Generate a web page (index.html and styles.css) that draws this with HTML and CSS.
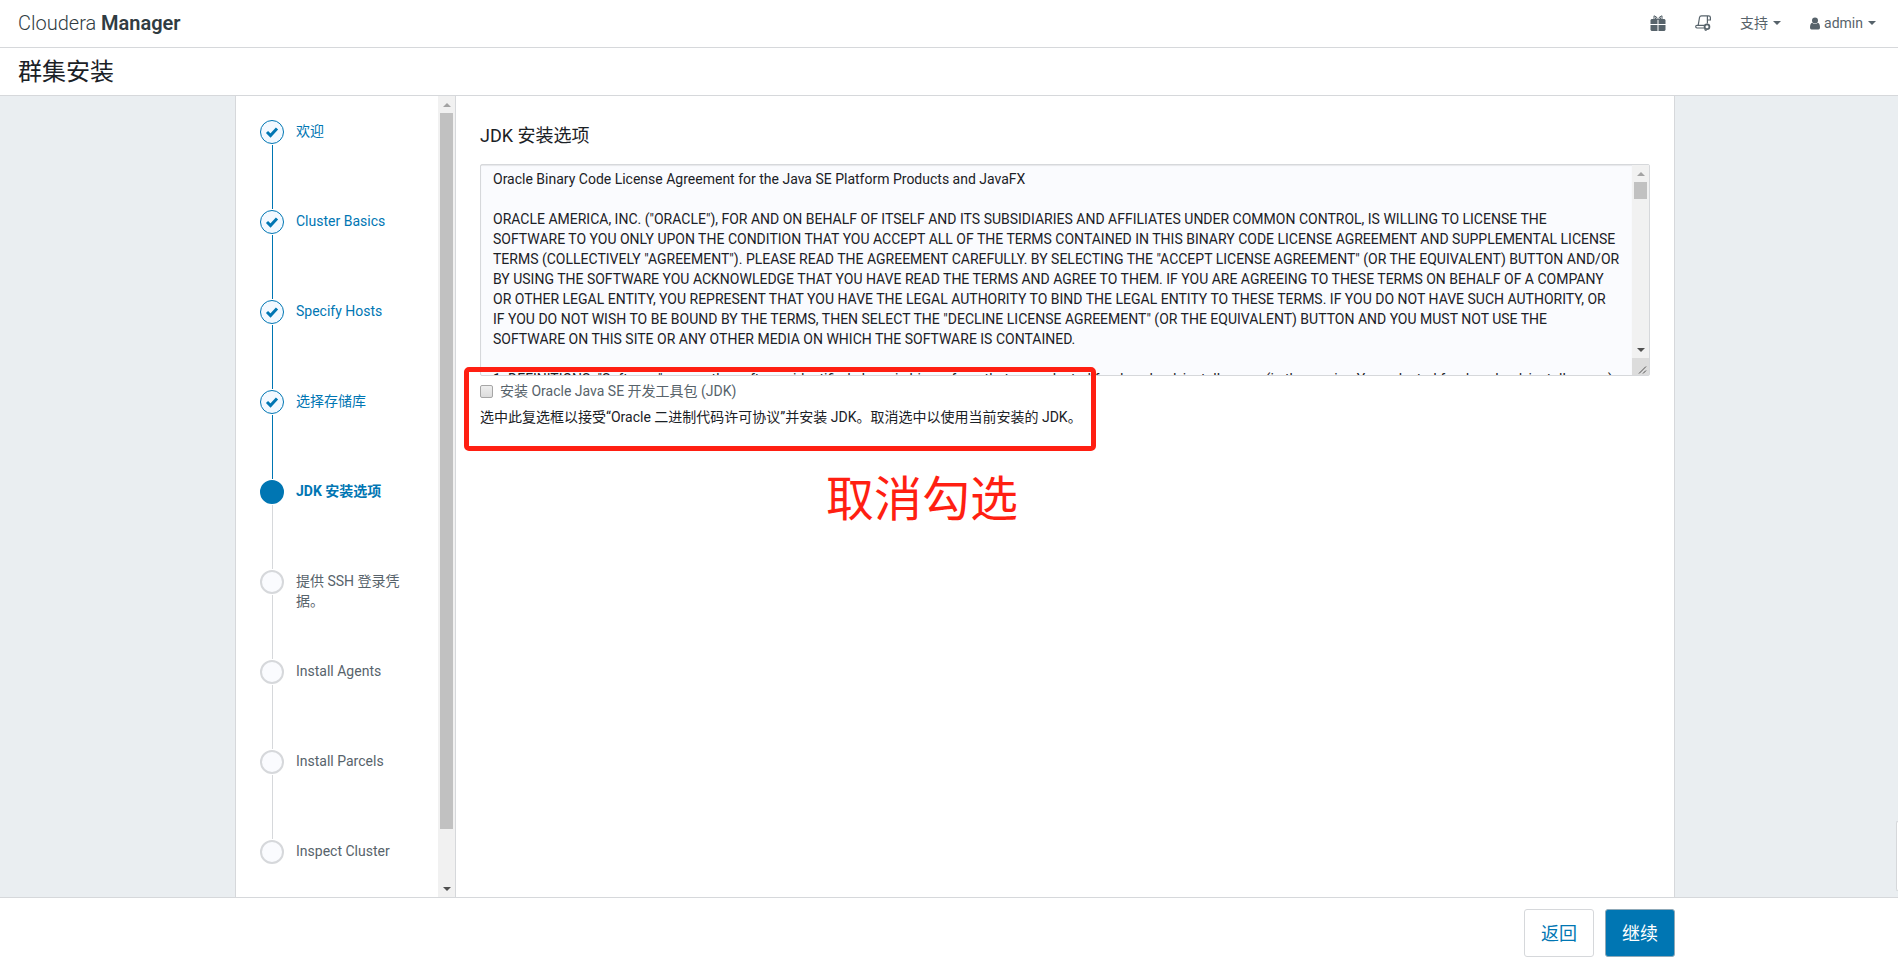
FILE: index.html
```html
<!DOCTYPE html>
<html lang="zh-CN">
<head>
    <meta charset="UTF-8">
    <meta name="viewport" content="width=device-width, initial-scale=1.0">
    <title>群集安装 - Cloudera Manager</title>
    <link rel="stylesheet" href="styles.css">
</head>
<body>
    <header class="navbar">
        <a class="brand" href="#">Cloudera <strong>Manager</strong></a>
        <nav class="nav">
            <a href="#" class="nav-icon" aria-label="Parcel">
                <svg width="16" height="16" viewBox="0 0 16 16">
                    <path d="M7.500 5 6.500 2 4 .8v3.700M8.500 5l1-3L12 .8v3.700M5.500 2.500v2M10.500 2.500v2" fill="none" stroke="#57636b"/>
                    <path d="M1.500 4h6v5H.5V5zM8.500 4h6l1 1v4h-7zM.5 10h7v6h-6l-1-1zM8.500 10h7v5l-1 1h-6z" fill="#57636b"/>
                </svg>
            </a>
            <a href="#" class="nav-icon" aria-label="运行命令">
                <svg width="16" height="16" viewBox="0 0 16 16" fill="none" stroke="#57636b" stroke-width="1.200">
                    <path d="M3.200 10.300 4.500 2.500Q4.800.8 6.500.8H13.500Q15.400.8 15.400 2.600V5h-3M12.400.8V8.500"/>
                    <path d="M9 10.300H2Q.7 10.300.7 11.600T2 13H9"/>
                    <circle cx="12" cy="11.800" r="2.400" stroke-width="1.800"/>
                    <path d="M9.500 14.500l2 1.200"/>
                </svg>
            </a>
            <a href="#" class="nav-link">支持<span class="caret"></span></a>
            <a href="#" class="nav-link">
                <svg class="user" width="10" height="13" viewBox="0 0 10 13" fill="#57636b">
                    <circle cx="5" cy="3.500" r="3"/>
                    <path d="M2.200 5.800Q5 8.400 7.800 5.800 10 6.500 10 10.500 10 12.500 8.500 12.500h-7Q0 12.500 0 10.500 0 6.500 2.200 5.800z"/>
                </svg>admin<span class="caret"></span>
            </a>
        </nav>
    </header>

    <div class="page-title">
        <h1>群集安装</h1>
    </div>

    <main class="content">
        <div class="wizard">
            <aside class="sidebar">
                <ol class="steps">
                    <li class="step done">
                        <span class="dot"><svg width="14" height="12" viewBox="0 0 14 12"><path d="M2 6l3.500 3.500L12 2.500"/></svg></span>
                        <a class="label" href="#">欢迎</a>
                    </li>
                    <li class="step done">
                        <span class="dot"><svg width="14" height="12" viewBox="0 0 14 12"><path d="M2 6l3.500 3.500L12 2.500"/></svg></span>
                        <a class="label" href="#">Cluster Basics</a>
                    </li>
                    <li class="step done">
                        <span class="dot"><svg width="14" height="12" viewBox="0 0 14 12"><path d="M2 6l3.500 3.500L12 2.500"/></svg></span>
                        <a class="label" href="#">Specify Hosts</a>
                    </li>
                    <li class="step done">
                        <span class="dot"><svg width="14" height="12" viewBox="0 0 14 12"><path d="M2 6l3.500 3.500L12 2.500"/></svg></span>
                        <a class="label" href="#">选择存储库</a>
                    </li>
                    <li class="step active">
                        <span class="dot"></span>
                        <a class="label" href="#">JDK 安装选项</a>
                    </li>
                    <li class="step">
                        <span class="dot"></span>
                        <span class="label">提供 SSH 登录凭据。</span>
                    </li>
                    <li class="step">
                        <span class="dot"></span>
                        <span class="label">Install Agents</span>
                    </li>
                    <li class="step">
                        <span class="dot"></span>
                        <span class="label">Install Parcels</span>
                    </li>
                    <li class="step">
                        <span class="dot"></span>
                        <span class="label">Inspect Cluster</span>
                    </li>
                </ol>
                <div class="scrollbar" aria-hidden="true">
                    <span class="arrow up"></span>
                    <div class="track"><div class="thumb" style="height: 93.4%"></div></div>
                    <span class="arrow down"></span>
                </div>
            </aside>

            <section class="panel">
                <h2>JDK 安装选项</h2>
                <div class="license">
                    <textarea aria-label="License" readonly>Oracle Binary Code License Agreement for the Java SE Platform Products and JavaFX

ORACLE AMERICA, INC. ("ORACLE"), FOR AND ON BEHALF OF ITSELF AND ITS SUBSIDIARIES AND AFFILIATES UNDER COMMON CONTROL, IS WILLING TO LICENSE THE SOFTWARE TO YOU ONLY UPON THE CONDITION THAT YOU ACCEPT ALL OF THE TERMS CONTAINED IN THIS BINARY CODE LICENSE AGREEMENT AND SUPPLEMENTAL LICENSE TERMS (COLLECTIVELY "AGREEMENT"). PLEASE READ THE AGREEMENT CAREFULLY. BY SELECTING THE "ACCEPT LICENSE AGREEMENT" (OR THE EQUIVALENT) BUTTON AND/OR BY USING THE SOFTWARE YOU ACKNOWLEDGE THAT YOU HAVE READ THE TERMS AND AGREE TO THEM. IF YOU ARE AGREEING TO THESE TERMS ON BEHALF OF A COMPANY OR OTHER LEGAL ENTITY, YOU REPRESENT THAT YOU HAVE THE LEGAL AUTHORITY TO BIND THE LEGAL ENTITY TO THESE TERMS. IF YOU DO NOT HAVE SUCH AUTHORITY, OR IF YOU DO NOT WISH TO BE BOUND BY THE TERMS, THEN SELECT THE "DECLINE LICENSE AGREEMENT" (OR THE EQUIVALENT) BUTTON AND YOU MUST NOT USE THE SOFTWARE ON THIS SITE OR ANY OTHER MEDIA ON WHICH THE SOFTWARE IS CONTAINED.

1. DEFINITIONS. "Software" means the software identified above in binary form that you selected for download, install or use (in the version You selected for download, install or use) from Oracle or its authorized licensees.</textarea>
                    <div class="scrollbar" aria-hidden="true">
                        <span class="arrow up"></span>
                        <div class="track"><div class="thumb"></div></div>
                        <span class="arrow down"></span>
                        <svg class="grip" width="17" height="17" viewBox="0 0 17 17"><path d="M7 15.500l7-7M11 15.500l3-3"/></svg>
                    </div>
                </div>
                <div class="accept">
                    <label class="check"><input type="checkbox">安装 Oracle Java SE 开发工具包 (JDK)</label>
                    <p>选中此复选框以接受“Oracle 二进制代码许可协议”并安装 JDK。取消选中以使用当前安装的 JDK。</p>
                    <div class="highlight"></div>
                </div>
                <p class="note">取消勾选</p>
            </section>
        </div>
        <div class="side-tab"></div>
    </main>

    <footer class="footer">
        <div class="actions">
            <button type="button" class="btn">返回</button>
            <button type="button" class="btn btn-primary">继续</button>
        </div>
    </footer>
</body>
</html>
```
FILE: styles.css
```css
* {
    box-sizing: border-box;
}

body {
    font-family: Roboto, "Noto Sans CJK SC", sans-serif;
    font-size: 14px;
    line-height: 20px;
    color: #1b2126;
    background-color: #ffffff;
    margin: 0;
    height: 100vh;
    display: flex;
    flex-direction: column;
}

h1, h2, p {
    margin: 0;
    font-weight: 400;
}

a {
    color: #0076b3;
    text-decoration: none;
}

.navbar {
    display: flex;
    justify-content: space-between;
    align-items: center;
    height: 48px;
    padding: 0 22px 1px 18px;
    border-bottom: 1px solid #d6d8db;
}

.brand {
    font-size: 20px;
    font-weight: 300;
    color: #303c42;
}

.brand strong {
    font-weight: 600;
}

.nav {
    display: flex;
    align-items: center;
    gap: 29px;
}

.nav-icon,
.nav-link {
    display: flex;
    align-items: center;
    color: #57636b;
}

.nav-link .user {
    margin-right: 4px;
}

.caret {
    margin-left: 5px;
    border-top: 4px solid #57636b;
    border-left: 4px solid transparent;
    border-right: 4px solid transparent;
}

.page-title {
    height: 48px;
    padding: 0 18px;
    border-bottom: 1px solid #d6d8db;
}

.page-title h1 {
    font-size: 24px;
    line-height: 49px;
}

.content {
    position: relative;
    flex: 1;
    min-height: 0;
    padding-left: 12px;
    background-color: #eaeef1;
}

.wizard {
    display: flex;
    max-width: 1440px;
    height: 100%;
    margin: 0 auto;
    border: 1px solid #d6d8db;
    border-width: 0 1px;
    background-color: #ffffff;
}

.sidebar {
    flex: none;
    display: flex;
    width: 220px;
    border-right: 1px solid #d6d8db;
}

.steps {
    flex: 1;
    list-style: none;
    margin: 0;
    padding: 24px 32px 0 24px;
    overflow-y: auto;
}

.step {
    position: relative;
    display: flex;
    gap: 12px;
    height: 90px;
    color: #57636b;
}

.step::after {
    content: "";
    position: absolute;
    left: 12px;
    top: 25px;
    bottom: 1px;
    border-left: 1px solid #d6d8db;
}

.step:last-child::after {
    display: none;
}

.label {
    padding-top: 1px;
}

.dot {
    flex: none;
    display: flex;
    align-items: center;
    justify-content: center;
    width: 24px;
    height: 24px;
    border: 2px solid #d6d8db;
    border-radius: 50%;
    background-color: #fafbfe;
}

.dot path {
    fill: none;
    stroke: #0076b3;
    stroke-width: 3;
}

.done .dot {
    border: 1px solid #0076b3;
    background-color: #f3f9ff;
}

.step.done::after {
    border-color: #0076b3;
}

.active .dot {
    border-color: #0076b3;
    background-color: #0076b3;
}

.active a {
    font-weight: 700;
}

/* scrollbars */
.scrollbar {
    flex: none;
    display: flex;
    flex-direction: column;
    width: 17px;
    background-color: #f1f1f1;
}

.track {
    flex: 1;
    padding: 0 2px;
}

.thumb {
    height: 17px;
    background-color: #c1c1c1;
}

.arrow {
    display: flex;
    align-items: center;
    justify-content: center;
    height: 17px;
}

.arrow::before {
    content: "";
    border: 4px solid transparent;
    border-width: 0 4px;
}

.arrow.up::before {
    border-bottom: 4px solid #a3a3a3;
}

.arrow.down::before {
    border-top: 4px solid #505050;
}

.grip {
    background-color: #dcdcdc;
    stroke: #505050;
}

.panel {
    flex: 1;
    min-width: 0;
    padding: 24px;
}

.panel h2 {
    font-size: 18px;
    line-height: 32px;
    margin-bottom: 12px;
}

.license {
    display: flex;
    height: 212px;
    border: 1px solid #d6d8db;
    border-radius: 2px;
    background-color: #fafbfe;
}

.license textarea {
    flex: 1;
    padding: 4px 12px;
    border: 0;
    outline: 0;
    background-color: transparent;
    box-shadow: inset 0 1px 1px rgba(0, 0, 0, 0.08);
    font: inherit;
    color: inherit;
    resize: none;
}

.accept {
    position: relative;
    padding-top: 5px;
}

.check {
    display: flex;
    align-items: center;
    gap: 7px;
    margin-bottom: 6px;
    color: #57636b;
}

.check input {
    appearance: none;
    width: 13px;
    height: 13px;
    margin: 0;
    border: 1px solid #a6a6a6;
    border-radius: 2px;
    background: linear-gradient(#eeeeee, #dcdcdc);
}

.check input:checked {
    background: #0076b3;
}

.highlight {
    position: absolute;
    top: -9px;
    left: -16px;
    width: 632px;
    height: 84px;
    border: 5px solid #ff1f12;
    border-radius: 5px;
    pointer-events: none;
}

.note {
    margin: 38px 0 0 346px;
    font-size: 48px;
    line-height: 70px;
    color: #ff1f12;
}

.side-tab {
    position: absolute;
    right: 0;
    bottom: 6px;
    width: 2px;
    height: 70px;
    border: 1px solid #d6d8db;
    border-right: 0;
    border-radius: 2px 0 0 2px;
    background-color: #ffffff;
}

.footer {
    padding: 11px 0 11px 12px;
    border-top: 1px solid #d6d8db;
}

.actions {
    display: flex;
    justify-content: flex-end;
    gap: 11px;
    max-width: 1440px;
    margin: 0 auto;
}

.btn {
    width: 70px;
    height: 48px;
    padding: 0 0 2px;
    border: 1px solid #d6d8db;
    border-radius: 3px;
    background-color: #ffffff;
    font-family: inherit;
    font-size: 18px;
    color: #0076b3;
    cursor: pointer;
}

.btn-primary {
    border-color: #8fa9b8;
    background-color: #0076b3;
    color: #ffffff;
}
```
